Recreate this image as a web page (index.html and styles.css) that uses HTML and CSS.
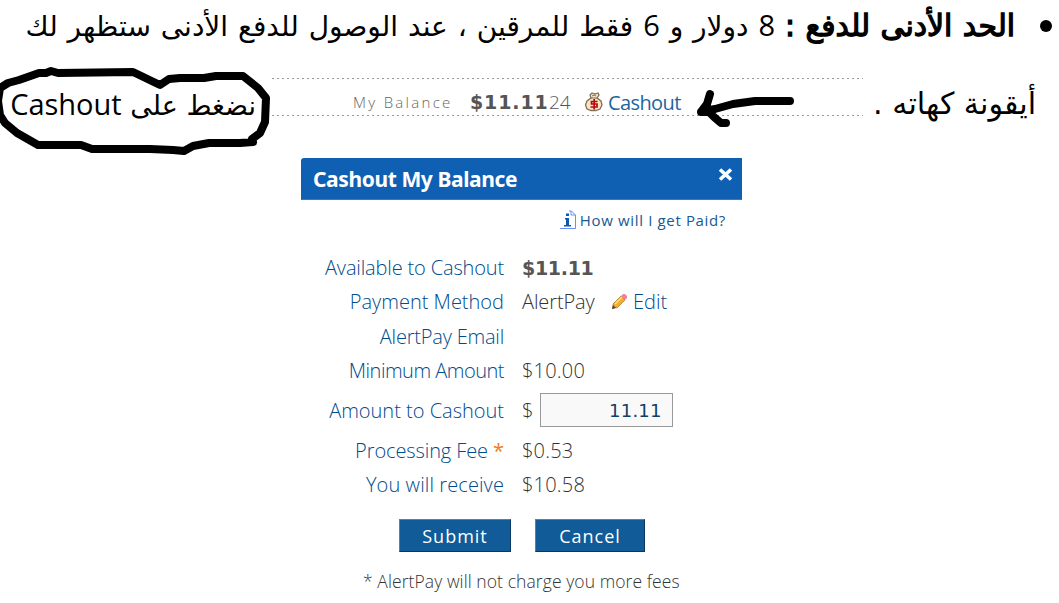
FILE: index.html
```html
<!DOCTYPE html>
<html lang="ar">
<head>
<meta charset="utf-8">
<title>Cashout</title>
<link rel="stylesheet" href="styles.css">
</head>
<body>
<main class="page">
  <div class="line line-first" dir="rtl">
    <span class="bullet"></span>
    <p class="copy intro"><span class="lead">الحد الأدنى للدفع :</span> <span class="num">8</span> دولار و <span class="num">6</span> فقط للمرقين ، عند الوصول للدفع الأدنى ستظهر لك</p>
  </div>
  <div class="line line-second">
    <p class="copy note" dir="rtl">نضغط على <span class="latin" dir="ltr">Cashout</span></p>
    <div class="balance" dir="ltr">
      <span class="balance-label">My Balance</span>
      <span class="balance-main">$11.11</span><span class="balance-rest">24</span>
      <svg class="bag" width="20" height="20" viewBox="0 0 20 20">
        <path d="M6 3 L8 1 L11 2 L14 1 L15 3 L13 6 L17 9 L18 13 L16 17 L12 18.5 L7 18.5 L3 17 L1.5 13 L3 9 L7 6 Z" fill="#fbe5c0" stroke="#80705c" stroke-width="1.3"/>
        <path d="M6.500 6h7M8 4l2-1 2 1" stroke="#776a5c" fill="none"/>
        <path d="M13.500 9.500H7.500v2.500h5.500v3H6.500M10.200 7v10.500" stroke="#b20b13" stroke-width="1.700" fill="none"/>
      </svg>
      <span class="balance-link">Cashout</span>
    </div>
    <p class="copy tail" dir="rtl">أيقونة كهاته .</p>
    <svg class="marks" width="1059" height="110" viewBox="0 50 1059 110">
      <path d="M0 88 L8 83 19 80 39 73 46 73 51 71 58 73 133 72 160 85 169 79 180 78 204 78 216 76 243 76 258 88 266 98 265 122 260 133 252 139 253 142 240 143 209 143 193 146 184 151 173 150 150 149 92 149 81 145 38 145 17 133 5 123 0 115 -2 101 Z"/>
      <path d="M790 101H755L733 104 715 109 701 112 707 104 710 94M701 112H709L714 117 721 123H726"/>
    </svg>
  </div>
  <section class="panel" dir="ltr">
    <header class="panel-head">
      <h1>Cashout My Balance</h1>
      <svg width="15" height="15" viewBox="0 0 15 15"><path d="M2 2.500L13 12.500M13 2.500L2 12.500" stroke="#fff" stroke-width="3.6"/></svg>
    </header>
    <div class="help">
      <svg width="16" height="20" viewBox="0 0 16 20"><path d="M0 18.5H15.5V5L11.500 1H9M11 1V5H15" fill="none" stroke="#6d8ff2"/><path d="M5 8H9V15H11V16.500H4V15H6V9.500H5ZM6 3.500H9V6H6Z" fill="#0d58ae"/></svg>
      <span>How will I get Paid?</span>
    </div>
    <dl class="rows">
      <dt class="available">Available to Cashout</dt><dd class="strong">$11.11</dd>
      <dt>Payment Method</dt>
      <dd><span class="method">AlertPay</span>
        <svg class="pencil" width="16" height="16" viewBox="0 0 16 16"><path d="M1 15L3 9 6 13Z" fill="#4b3626"/><path d="M2 10L10 2 14 6 6 14 2 13Z" fill="#f0ad32" stroke="#b77d2b" stroke-width=".8"/><path d="M4 10L11 3" stroke="#ffe17a" stroke-width="1.500"/><path d="M10 2L12 0H14L16 2V4L14 6Z" fill="#ee829d"/><path d="M1 15L2 11 5 14Z" fill="#5a4230"/></svg>
        <span class="edit">Edit</span></dd>
      <dt class="email">AlertPay Email</dt><dd></dd>
      <dt class="minimum">Minimum Amount</dt><dd class="amount">$10.00</dd>
      <dt>Amount to Cashout</dt><dd class="amount">$<span class="field">11.11</span></dd>
      <dt class="fee">Processing Fee <i>*</i></dt><dd class="amount">$0.53</dd>
      <dt class="receive">You will receive</dt><dd class="amount">$10.58</dd>
    </dl>
    <div class="actions">
      <button class="submit">Submit</button>
      <button class="cancel">Cancel</button>
    </div>
    <p class="foot">* AlertPay will not charge you more fees</p>
  </section>
</main>
</body>
</html>
```
FILE: styles.css
```css
* { box-sizing: border-box; }
body { margin: 0; background: #fff; overflow: hidden; }
p, dl, dd, h1 { margin: 0; }
.page { width: 1059px; height: 603px; font-family: "Open Sans", "Noto Sans", sans-serif; color: #000; }
.line { display: flex; position: relative; white-space: nowrap; }
.line-first { height: 52px; align-items: center; padding-right: 7px; }
.bullet { width: 12px; height: 12px; margin-left: 25px; border-radius: 50%; background: #000; flex: none; }
.copy { font-family: "DejaVu Sans", sans-serif; font-size: 27px; line-height: 40px; }
.intro { font-size: 28px; word-spacing: 1px; }
.lead { font-size: 29.800px; -webkit-text-stroke: 1.3px #000; }
.num, .latin { font-family: "Open Sans", "Noto Sans", sans-serif; font-size: 29px; }
.line-second { height: 106px; }
.note { width: 272px; flex: none; padding: 32px 16px 0 0; }
.balance { width: 591px; flex: none; height: 39px; margin-top: 26px; background: repeating-linear-gradient(90deg, #999 0 2px, transparent 2px 5px) 0 0 / 100% 1px no-repeat, repeating-linear-gradient(90deg, #999 0 2px, transparent 2px 5px) 0 37px / 100% 1px no-repeat; display: flex; align-items: center; padding: 9px 0 0 81px; }
.balance-label { width: 117px; font-size: 15px; font-weight: 300; letter-spacing: 2.3px; color: #666; }
.balance-main { width: 79px; font: bold 19px "DejaVu Sans", sans-serif; letter-spacing: .9px; color: #555; }
.balance-rest { width: 35px; font-size: 19px; font-weight: 300; color: #555; }
.bag { margin-right: 4px; }
.balance-link { font-size: 20px; letter-spacing: -.6px; color: #1c659f; }
.tail { padding: 32px 0 0 10px; font-size: 30.200px; }
.marks { position: absolute; left: 0; top: -2px; fill: none; stroke: #000; stroke-width: 8; stroke-linecap: round; stroke-linejoin: round; }
.panel { width: 441px; margin-left: 301px; color: #333; white-space: nowrap; }
.panel-head { height: 42px; display: flex; justify-content: space-between; align-items: center; padding: 0 9px 0 12px; background: #0f60b3; border-bottom: 1px solid #3b78b6; border-top-left-radius: 3px; }
.panel-head h1 { font: bold 21px/30px "Noto Sans", sans-serif; letter-spacing: -.4px; color: #fff; }
.panel-head svg { margin-top: -8px; }
.help { height: 51px; padding: 10px 16px 0 0; display: flex; justify-content: flex-end; align-items: flex-start; gap: 4px; font-size: 15px; line-height: 21px; letter-spacing: .65px; color: #155a96; }
.rows { display: grid; grid-template-columns: 203px 1fr; grid-template-rows: 34px 34px 35px 34px 45px 35px 34px; column-gap: 18px; align-items: center; font-size: 20px; font-weight: 300; line-height: 30px; }
dt { text-align: right; color: #004b8c; }
dd { display: flex; align-items: center; height: 34px; }
i { font-style: normal; font-weight: 400; color: #f27818; }
.available { letter-spacing: -.15px; }
.email { letter-spacing: -.2px; }
.minimum { letter-spacing: -.5px; }
.fee { letter-spacing: -.1px; }
.receive { letter-spacing: .1px; }
.strong { font: bold 19px "DejaVu Sans", sans-serif; letter-spacing: -.3px; color: #555; }
.method { width: 73px; letter-spacing: -.1px; }
.amount { letter-spacing: .2px; }
.pencil { margin: 0 6px 0 16px; }
.edit { color: #004b8c; }
.field { width: 133px; height: 34px; margin: -2px 0 0 6px; padding-right: 10px; border: 1px solid #999; background: #f9f9f9; color: #113e66; text-align: right; font: 18px/34px "DejaVu Sans", sans-serif; }
.actions { display: flex; gap: 24px; padding: 17px 0 0 98px; }
button { height: 33px; padding: 2px 0 0; border: 1px solid; border-color: #3989c7 #0a3861 #0a3861 #3989c7; background: #105b98; color: #fff; font: 18px/29px "Open Sans", sans-serif; letter-spacing: 1px; }
.submit { width: 112px; }
.cancel { width: 110px; }
.foot { padding: 14px 0 0 62px; font-size: 17.500px; font-weight: 300; line-height: 30px; letter-spacing: .08px; }
```
